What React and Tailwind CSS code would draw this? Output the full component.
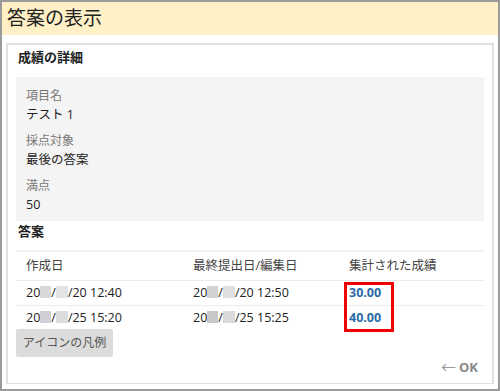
import React from "react";

const font = { fontFamily: '"Open Sans", "Noto Sans CJK JP", sans-serif' };

function Masked({ w = "w-[11px]", shade = "bg-[#d4d4d4]" }) {
  return <span className={`inline-block h-[12px] align-[-1px] ${w} ${shade}`}></span>;
}

function DateCell({ a, b, rest }) {
  return (
    <span className="whitespace-nowrap">
      20
      <Masked w="w-[11px]" shade={a} />/
      <Masked w="w-[12px]" shade={b} />
      {rest}
    </span>
  );
}

function Field({ label, value }) {
  return (
    <div className="mb-[7px]">
      <div className="text-[12px] leading-[18px] text-[#777]">{label}</div>
      <div className="text-[12.5px] leading-[20px] text-[#222]">{value}</div>
    </div>
  );
}

export default function App() {
  const rows = [
    { created: ["bg-[#d8d8d8]", "bg-[#e4e4e4]", "/20 12:40"], edited: ["bg-[#d2d2d2]", "bg-[#e0e0e0]", "/20 12:50"], score: "30.00" },
    { created: ["bg-[#cfcfd6]", "bg-[#dcdcdc]", "/25 15:20"], edited: ["bg-[#c8c8c8]", "bg-[#dadada]", "/25 15:25"], score: "40.00" },
  ];

  return (
    <div style={font} className="w-[500px] h-[391px] border-2 border-[#9b9b9b] bg-white flex flex-col overflow-hidden">
      <div className="h-[33px] shrink-0 bg-[#fff0c6] flex items-center px-[5px]">
        <h1 className="text-[19px] text-[#222] leading-none">答案の表示</h1>
      </div>

      <div className="flex-1 px-[4px] pt-[8px] pb-[5px] flex flex-col">
        <div className="flex-1 border-2 border-[#e0e0e0] border-b-[1.5px] flex flex-col">
          <h2 className="text-[13px] font-bold text-[#222] pl-[10px] pt-[1px] h-[32px] leading-[22px]">成績の詳細</h2>

          <div className="mx-[8px] bg-[#f4f4f4] pl-[10px] pt-[10px] h-[144px]">
            <Field label="項目名" value="テスト 1" />
            <Field label="採点対象" value="最後の答案" />
            <Field label="満点" value="50" />
          </div>

          <h2 className="text-[13px] font-bold text-[#222] pl-[10px] leading-[20px]">答案</h2>

          <div className="mx-[8px] mt-[9px] border-t-2 border-[#f0f0f0] text-[12.5px] text-[#222]">
            <div className="grid grid-cols-[167px_158px_1fr] h-[29px] items-center border-b border-[#ececec]">
              <div className="pl-[10px] text-[#444]">作成日</div>
              <div className="pl-[10px] text-[#444]">最終提出日/編集日</div>
              <div className="pl-[8px] text-[#444]">集計された成績</div>
            </div>
            <div className="relative">
              {rows.map((r, i) => (
                <div
                  key={i}
                  className={`grid grid-cols-[167px_158px_1fr] h-[25px] items-center ${i === 0 ? "border-b border-[#ececec]" : ""}`}
                >
                  <div className="pl-[10px]"><DateCell a={r.created[0]} b={r.created[1]} rest={r.created[2]} /></div>
                  <div className="pl-[10px]"><DateCell a={r.edited[0]} b={r.edited[1]} rest={r.edited[2]} /></div>
                  <div className="pl-[8px] font-bold text-[#2a6aa6]">{r.score}</div>
                </div>
              ))}
              <div className="absolute left-[328px] top-[1px] w-[50px] h-[50px] border-[3px] border-[#f00000]"></div>
            </div>
          </div>

          <div className="mx-[8px] -mt-[2px]">
            <button className="w-[97px] h-[28px] bg-[#dcdcdc] text-[12px] text-[#555] rounded-[2px]">アイコンの凡例</button>
          </div>

          <div className="flex-1 flex items-end justify-end pr-[14px] pb-[6px]">
            <span className="text-[13px] font-bold text-[#888] flex items-center gap-[3px]">
              <span className="font-normal text-[15px] leading-none text-[#999]">←</span>OK
            </span>
          </div>
        </div>
      </div>
    </div>
  );
}
